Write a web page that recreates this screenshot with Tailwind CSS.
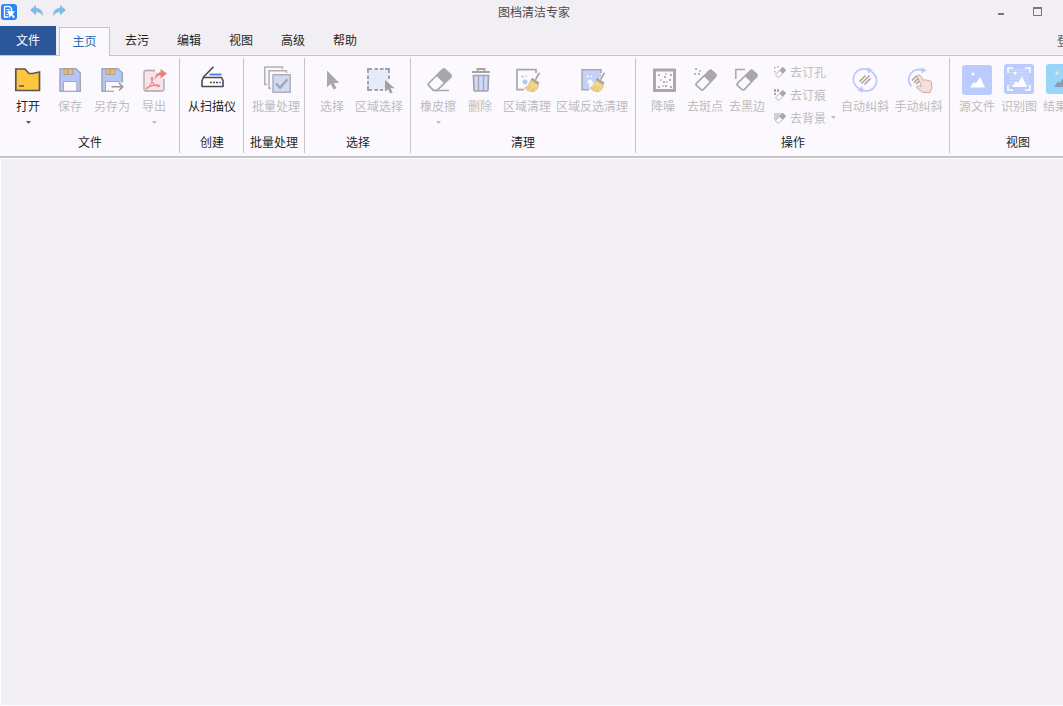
<!DOCTYPE html>
<html lang="zh-CN">
<head>
<meta charset="utf-8">
<meta name="viewport" content="width=device-width, initial-scale=1">
<title>图档清洁专家</title>
<script src="https://cdn.jsdelivr.net/npm/@tailwindcss/browser@4"></script>
</head>
<body class="flex min-h-screen flex-col overflow-hidden bg-[#f1eff3] font-['Liberation_Sans','Noto_Sans_CJK_SC',sans-serif] text-xs leading-4 text-[#1f1f1f]">

<!-- shared shapes -->
<svg class="hidden" aria-hidden="true">
  <symbol id="eraser" viewBox="0 0 24 24">
    <path d="M1.800 15.400 15.600 1.900a2 2 0 0 1 2.800 0l3.900 3.700a2 2 0 0 1 0 2.800L9.300 22.200a2 2 0 0 1-2.800 0l-4.700-4a2 2 0 0 1 0-2.800Z" fill="#fbf9fd" stroke="#a9a7ab" stroke-width="1.800"/>
    <path d="M9.600 7.800 15.600 1.500a2 2 0 0 1 2.800 0l4.300 4.100a2 2 0 0 1 0 2.800l-6 6.400Z" fill="#a9a7ab"/>
  </symbol>
  <symbol id="broom" viewBox="0 0 16 20">
    <path d="M15 .8 11 7.600" stroke="#a9a7ab" stroke-width="1.800" fill="none"/>
    <path d="m7.500 5.700 7.500 4.800-1.200 2.200-7.500-4.600Z" fill="#aaa39d"/>
    <path d="M6.200 8.300 13.800 13c-.4 3-2 5.400-4.600 6.600C5.600 19.600 2 18.500 .3 16c2.600-1 4.700-3.900 5.900-7.700Z" fill="#f3d588" stroke="#c6ac83" stroke-width=".7"/>
    <path d="m3.600 17 2.600-2.600M7 18.500l2.300-3" stroke="#d0a862" stroke-width=".8"/>
  </symbol>
  <symbol id="caret" viewBox="0 0 5 3"><path d="M0 0h5L2.500 3Z" fill="currentColor"/></symbol>
</svg>

<header class="flex h-[26px] items-start">
  <div class="flex flex-1 items-center pl-px pt-1">
    <svg class="size-4" viewBox="0 0 16 16" role="img" aria-label="图档清洁专家">
      <rect width="16" height="16" rx="3" fill="#2c83f4"/>
      <path d="M3.500 2.500h5l2 2v2.500M3.500 2.500v10.500h4" stroke="#fff" stroke-width="1.400" fill="none"/>
      <path d="M5.500 5.500h3M5.500 8h2M5.500 10.500h1.500" stroke="#fff" fill="none"/>
      <path d="m6.500 6.500 7.500 1-2.500 2.500 2.500 3-1.200 1.200-2.800-2.700-1.500 2.500Z" fill="#fff"/>
    </svg>
    <button type="button" aria-label="撤销" class="-mt-0.5 ml-[13px]">
      <svg class="h-3 w-[14px]" viewBox="0 0 14 12"><path d="M0 5 6 0v3c4.500 0 7 3 7 8.500C11.500 8.500 9.500 7.300 6 7.300v3Z" fill="#82bce2"/></svg>
    </button>
    <button type="button" aria-label="重做" class="-mt-0.5 ml-2">
      <svg class="h-3 w-[14px]" viewBox="0 0 14 12"><path d="M14 5 8 0v3C3.500 3 1 6 1 11.500 2.500 8.500 4.500 7.300 8 7.300v3Z" fill="#82bce2"/></svg>
    </button>
  </div>
  <h1 class="ml-3 pt-[5px] text-[#4b494d]">图档清洁专家</h1>
  <div class="flex flex-1 justify-end pr-2">
    <button type="button" aria-label="最小化" class="flex h-[23px] w-9 items-center justify-center">
      <svg class="size-[11px]" viewBox="0 0 11 11"><path d="M2 7h6v2H2Z" fill="#77757a"/></svg>
    </button>
    <button type="button" aria-label="最大化" class="flex h-[23px] w-9 items-center justify-center">
      <svg class="size-[9px]" viewBox="0 0 9 9"><path d="M.5 1v7.500h8V1Z" fill="none" stroke="#77757a"/><path d="M0 0h9v2H0Z" fill="#77757a"/></svg>
    </button>
  </div>
</header>

<nav class="flex h-[30px] border-b border-[#c6c4c8]" aria-label="功能区">
  <button type="button" class="mr-[3px] w-14 bg-[#2b579a] pt-px text-white">文件</button>
  <button type="button" class="-mb-px w-[52px] pr-px pt-px"><span class="flex h-full items-center justify-center border border-b-0 border-[#c6c4c8] bg-[#fbf9fd] pb-px text-[#2b66ae]">主页</span></button>
  <button type="button" class="w-[52px] pt-px">去污</button>
  <button type="button" class="w-[52px] pt-px">编辑</button>
  <button type="button" class="w-[52px] pt-px">视图</button>
  <button type="button" class="w-[52px] pt-px">高级</button>
  <button type="button" class="w-[52px] pt-px">帮助</button>
  <button type="button" class="-mr-[18px] ml-auto shrink-0 whitespace-nowrap pt-0.5 text-[#5a585c]">登录</button>
</nav>

<div class="flex overflow-hidden whitespace-nowrap border-b-2 border-[#c6c4c8] bg-[#fbf9fd] pb-[3px] pt-0.5" role="toolbar">

  <section class="shrink-0 border-r border-[#c6c4c8] pb-0.5 pl-[7px] pr-1" aria-labelledby="g-file">
    <div class="flex h-[77px] items-start text-[#bebcc0]">
      <button type="button" class="flex w-[42px] flex-col items-center gap-[3px] pt-1.5 text-[#1f1f1f]">
        <svg class="size-8" viewBox="0 0 32 32"><path d="M3.800 5h9.200l4 4.500h3.500L27.500 8v18.500H3.800Z" fill="#fcc63f" stroke="#5a5651" stroke-width="1.700"/><path d="M7 22h5" stroke="#5a5651" stroke-width="1.500"/></svg>
        <span>打开</span>
        <svg class="mt-[3px] h-[3px] w-[5px] text-[#5c5a5e]"><use href="#caret"/></svg>
      </button>
      <button type="button" disabled class="flex w-[42px] flex-col items-center gap-[3px] pt-1.5">
        <svg class="size-8" viewBox="0 0 32 32"><path d="M6 4.700h16L26.300 9v18.300H6Z" fill="#b4c6f8" stroke="#a5a7b5" stroke-width="1.500" stroke-linejoin="round"/><path d="M10 5h9v5.500h-9Z" fill="#eebb75" stroke="#ad9d91" stroke-width="1"/><path d="M14 5.500v4" stroke="#ad9579" stroke-width="1.300"/><path d="M9.500 17.500h13.300v9.700H9.500Z" fill="#fbf9fd" stroke="#a9a7ab"/></svg>
        <span>保存</span>
      </button>
      <button type="button" disabled class="flex w-[42px] flex-col items-center gap-[3px] pt-1.5">
        <svg class="size-8" viewBox="0 0 32 32"><path d="M6 4.700h16L26.300 9v18.300H6Z" fill="#b4c6f8" stroke="#a5a7b5" stroke-width="1.500" stroke-linejoin="round"/><path d="M10 5h9v5.500h-9Z" fill="#eebb75" stroke="#ad9d91" stroke-width="1"/><path d="M14 5.500v4" stroke="#ad9579" stroke-width="1.300"/><path d="M9.500 17.500h13.300v9.700H9.500Z" fill="#fbf9fd" stroke="#a9a7ab"/><path d="M18 18.500h10V29H18Z" fill="#fbf9fd"/><path d="M15.500 22.700h11M23 19l3.800 3.700L23 26.500" fill="none" stroke="#9a989c" stroke-width="1.600"/></svg>
        <span>另存为</span>
      </button>
      <button type="button" disabled class="flex w-[42px] flex-col items-center gap-[3px] pt-1.5">
        <svg class="size-8" viewBox="0 0 32 32"><path d="M17 6.500H7.500a1.500 1.500 0 0 0-1.500 1.500v17.500A1.500 1.500 0 0 0 7.500 27H24.500a1.500 1.500 0 0 0 1.500-1.500V14Z" fill="#f8e3e9"/><path d="M17 6.500H7.500a1.500 1.500 0 0 0-1.500 1.500v17.500A1.500 1.500 0 0 0 7.500 27H24.500a1.500 1.500 0 0 0 1.500-1.500V15" fill="none" stroke="#a9a7ab" stroke-width="1.300"/><path d="M9 24.500c2-1 5.500-6.500 5.800-10 .1-1.600-2-1.500-1.600.2.900 4 3.300 6.800 6.300 7.800 2.500.7 3-1.300.7-1.600-3.500-.4-8 1-11 2.600-1.700 1-1.100 1.700-.2 1Z" fill="none" stroke="#e58d94" stroke-width="1.200"/><path d="M16.500 16c.5-5 2.500-7.500 6-7.500V5l6.500 4.500-6.500 5v-3.300c-2.500 0-4.400 1.500-6 4.800Z" fill="#e2847f"/></svg>
        <span>导出</span>
        <svg class="mt-[3px] h-[3px] w-[5px]"><use href="#caret"/></svg>
      </button>
    </div>
    <h2 id="g-file" class="pr-0.5 text-center">文件</h2>
  </section>

  <section class="shrink-0 border-r border-[#c6c4c8] pb-0.5 pl-[5px] pr-1" aria-labelledby="g-new">
    <div class="flex h-[77px] items-start">
      <button type="button" class="flex w-[54px] flex-col items-center gap-[3px] pt-1.5">
        <svg class="size-8" viewBox="0 0 32 32" fill="none"><path d="M7 13.500 17.500 2.700" stroke="#4a484c" stroke-width="1.600"/><path d="M13.500 10.500h12" stroke="#4c79ea" stroke-width="1.800"/><path d="M7.500 13.500h18l1.500 3v6H6v-6Z" fill="#fff" stroke="#4a484c" stroke-width="1.600" stroke-linejoin="round"/><path d="M14 18.500h9" stroke="#4a484c" stroke-width="1.600" stroke-dasharray="2 1"/><path d="M23 18.500h2" stroke="#4c79ea" stroke-width="1.600"/></svg>
        <span>从扫描仪</span>
      </button>
    </div>
    <h2 id="g-new" class="text-center">创建</h2>
  </section>

  <section class="shrink-0 border-r border-[#c6c4c8] pb-0.5 pl-[5px] pr-px" aria-labelledby="g-batch">
    <div class="flex h-[77px] items-start text-[#bebcc0]">
      <button type="button" disabled class="flex w-[54px] flex-col items-center gap-[3px] pt-1.5">
        <svg class="size-8" viewBox="0 0 32 32" fill="none"><path d="M22.500 5V3H4.800v17.500H7M26.500 9V6.800H9v17.500h2" stroke="#b2b0b5" stroke-width="1.500"/><path d="M13 10.800h17.200v17.400H13Z" fill="#cfdaf5" stroke="#b2b0b5" stroke-width="1.500"/><path d="m16 19.500 4 4.300 7.500-8.500" stroke="#a3a3ab" stroke-width="2.200"/></svg>
        <span>批量处理</span>
      </button>
    </div>
    <h2 id="g-batch" class="pr-1 text-center">批量处理</h2>
  </section>

  <section class="shrink-0 border-r border-[#c6c4c8] pb-0.5 pl-[7px] pr-1" aria-labelledby="g-select">
    <div class="flex h-[77px] items-start text-[#bebcc0]">
      <button type="button" disabled class="flex w-10 flex-col items-center gap-[3px] pt-1.5">
        <svg class="size-8" viewBox="0 0 32 32"><path d="M11 6.500v16.700l3.800-3.300 2.700 5.700 3-1.400-2.700-5.300h5.500Z" fill="#a9a7ab"/></svg>
        <span>选择</span>
      </button>
      <button type="button" disabled class="flex w-[54px] flex-col items-center gap-[3px] pt-1.5">
        <svg class="size-8" viewBox="0 0 32 32"><path d="M5 5h21v21H5Z" fill="#e4ecfa"/><path d="M9 5H5v4M22 5h4v4M9 26H5v-4M11.500 5h3.500M17 5h3.500M5 11.500V15M5 17v3.500M26 11.500V15M11.500 26h3.500M17 26h3" fill="none" stroke="#a3a1a6" stroke-width="1.900"/><path d="M22 16v11.700l3-2.500 2.200 4.300 2.500-1.300-2.200-3.900h4.200Z" fill="#a3a1a6"/></svg>
        <span>区域选择</span>
      </button>
    </div>
    <h2 id="g-select" class="pr-0.5 text-center">选择</h2>
  </section>

  <section class="shrink-0 border-r border-[#c6c4c8] pb-0.5 pl-1.5 pr-1" aria-labelledby="g-clean">
    <div class="flex h-[77px] items-start text-[#bebcc0]">
      <button type="button" disabled class="flex w-[42px] flex-col items-center gap-[3px] pt-1.5">
        <svg class="size-8" viewBox="0 0 32 32"><path d="M7 19 20.500 5.500a2 2 0 0 1 2.800 0l5.200 5a2 2 0 0 1 0 2.800L15 26.300h-3.500L7 21.800a2 2 0 0 1 0-2.800Z" fill="#fbf9fd" stroke="#a9a7ab" stroke-width="1.700"/><path d="m14.300 11.700 6.200-6.200a2 2 0 0 1 2.800 0l5.200 5a2 2 0 0 1 0 2.800l-6.200 6.200Z" fill="#a9a7ab"/><path d="M12 26.500h15" stroke="#a9a7ab" stroke-width="1.500"/></svg>
        <span>橡皮擦</span>
        <svg class="mt-[3px] h-[3px] w-[5px]"><use href="#caret"/></svg>
      </button>
      <button type="button" disabled class="flex w-[42px] flex-col items-center gap-[3px] pt-1.5">
        <svg class="size-8" viewBox="0 0 32 32" fill="none"><path d="M13.500 7V5h7v2M8 8h18" stroke="#a5a3a8" stroke-width="1.800"/><path d="M9.500 11.500h15L24 26a1 1 0 0 1-1 1H11a1 1 0 0 1-1-1Z" fill="#cddafb" stroke="#a5a3a8" stroke-width="1.700"/><path d="M14.500 12v14M19.500 12v14" stroke="#a5a3b0" stroke-width="1.300"/></svg>
        <span>删除</span>
      </button>
      <button type="button" disabled class="flex w-[52px] flex-col items-center gap-[3px] pt-1.5">
        <svg class="size-8" viewBox="0 0 32 32"><path d="M25 9V5.700H6v20h7" fill="none" stroke="#a9a7ab" stroke-width="1.700"/><path d="M10.500 11.500h2v2h-2Zm4 0H16V13h-1.500Zm-.5 4a2.500 2.500 0 1 1 0 5 2.500 2.500 0 0 1 0-5Z" fill="#b6c7f6"/><use href="#broom" x="13" y="8" width="17" height="20"/></svg>
        <span>区域清理</span>
      </button>
      <button type="button" disabled class="flex w-[78px] flex-col items-center gap-[3px] pt-1.5">
        <svg class="size-8" viewBox="0 0 32 32"><path d="M6 5.700h19V13l-7 5-5 3.500v4.200H6Z" fill="#c2d0fa"/><path d="M25 9V5.700H6v20h7" fill="none" stroke="#a9a7b4" stroke-width="1.500"/><path d="M10.500 11.500h2v2h-2Zm4 0H16V13h-1.500Zm-.5 4a2.500 2.500 0 1 1 0 5 2.500 2.500 0 0 1 0-5Z" fill="#fbf9fd"/><use href="#broom" x="13" y="8" width="17" height="20"/></svg>
        <span>区域反选清理</span>
      </button>
    </div>
    <h2 id="g-clean" class="pr-0.5 text-center">清理</h2>
  </section>

  <section class="shrink-0 border-r border-[#c6c4c8] pb-0.5 pl-1.5 pr-[3px]" aria-labelledby="g-ops">
    <div class="flex h-[77px] items-start text-[#bebcc0]">
      <button type="button" disabled class="flex w-[42px] flex-col items-center gap-[3px] pt-1.5">
        <svg class="size-8" viewBox="0 0 32 32"><path d="M7.500 6h20v20.500h-20Z" fill="#fbf9fd" stroke="#a9a7ab" stroke-width="3"/><path d="M11 10h2v2h-2Zm6 2h2v2h-2Zm6-2h2v2h-2Zm-1 5h2v2h-2Zm-6 2h2v2h-2Zm-5 5h2v2h-2Zm7-1h2v2h-2Zm5 1h2v2h-2Z" fill="#b1afb4"/><path d="M18 9h2v2h-2Zm-5 6h2v2h-2Zm6 2h2v2h-2Zm-4 4h2v2h-2Z" fill="#e3c3ba"/></svg>
        <span>降噪</span>
      </button>
      <button type="button" disabled class="flex w-[42px] flex-col items-center gap-[3px] pt-1.5">
        <svg class="size-8" viewBox="0 0 32 32"><use href="#eraser" x="6" y="5" width="22" height="22"/><path d="M5 9h2v2H5Zm4 0h2v2H9ZM6 4h2v2H6Z" fill="#b5b3b8"/><path d="M10 6h2v2h-2Z" fill="#b8c6ef"/></svg>
        <span>去斑点</span>
      </button>
      <button type="button" disabled class="flex w-[42px] flex-col items-center gap-[3px] pt-1.5">
        <svg class="size-8" viewBox="0 0 32 32"><use href="#eraser" x="5" y="5" width="22" height="22"/><path d="M4.800 15V5.500H14" fill="none" stroke="#a9a7ab" stroke-width="1.500"/></svg>
        <span>去黑边</span>
      </button>
      <div class="ml-[5px] flex w-[65px] flex-col pt-[3px]">
        <button type="button" disabled class="flex h-[23px] items-center gap-[3px]">
          <svg class="-mt-0.5 size-[14px]" viewBox="0 0 14 14"><use href="#eraser" x="2" y="2" width="11" height="11"/><path d="M1 2h1.500v1.500H1Zm3-1h1.500v1.500H4ZM1 6h1.500v1.500H1Z" fill="#b8ad98"/></svg>
          <span>去订孔</span>
        </button>
        <button type="button" disabled class="flex h-[23px] items-center gap-[3px]">
          <svg class="-mt-0.5 size-[14px]" viewBox="0 0 14 14"><use href="#eraser" x="2" y="2" width="11" height="11"/><path d="M1 1h2v3H1Zm3 0h2v3H4ZM1 5h2v2H1Z" fill="#b5a98c"/></svg>
          <span>去订痕</span>
        </button>
        <button type="button" disabled class="flex h-[23px] items-center gap-[3px]">
          <svg class="-mt-0.5 size-[14px]" viewBox="0 0 14 14"><path d="M1 2h8v2L3 9H1Z" fill="#d3d1d6"/><use href="#eraser" x="2" y="2" width="11" height="11"/></svg>
          <span>去背景</span>
          <svg class="-mt-0.5 ml-0.5 h-[3px] w-[5px] shrink-0"><use href="#caret"/></svg>
        </button>
      </div>
      <button type="button" disabled class="flex w-[54px] flex-col items-center gap-[3px] pt-1.5">
        <svg class="size-8" viewBox="0 0 32 32" fill="none"><path d="M9.500 24A10 10 0 0 1 19.500 6.300M22.500 8A10 10 0 0 1 12.500 25.600" stroke="#bccafa" stroke-width="1.800"/><path d="m18.500 3 5.500 3.500-5 3ZM13.500 22.500 8 25.500l5.500 3.500Z" fill="#bccafa"/><path d="m10.500 17.500 6-6M12.500 19.500l8-8M15.500 20.500l6-6" stroke="#a9a09f" stroke-width="1.500"/></svg>
        <span>自动纠斜</span>
      </button>
      <button type="button" disabled class="flex w-[54px] flex-col items-center gap-[3px] pt-1.5 pr-px">
        <svg class="size-8" viewBox="0 0 32 32" fill="none"><path d="M8.500 22.500A10 10 0 0 1 19.500 6.300" stroke="#bccafa" stroke-width="1.800"/><path d="m18.500 3 5 3.500-5 3Z" fill="#bccafa"/><path d="m9 16.500 5-5M11 18.500l5.500-5.500M13 20l3-3" stroke="#a9a09f" stroke-width="1.500"/><path d="M15 11.500c1-1 2-.5 2.600.4l3 4.600c1.200-1.200 2.600-1 3 0 1-.8 2.300-.6 2.700.5 1-.4 2 0 2.200 1.300l.5 5.700-2 4.500h-7L14 24c-1-1.500.2-2.500 1.500-2l3 .5-3.700-8.700c-.4-.9-.3-1.800.2-2.300Z" fill="#f6dfd8" stroke="#c9aaa4"/></svg>
        <span>手动纠斜</span>
      </button>
    </div>
    <h2 id="g-ops" class="pr-0.5 text-center">操作</h2>
  </section>

  <section class="shrink-0 pb-0.5 pl-1.5 pr-1" aria-labelledby="g-view">
    <div class="flex h-[77px] items-start text-[#bebcc0]">
      <button type="button" disabled class="flex w-[42px] flex-col items-center gap-[3px] pt-1.5">
        <svg class="size-8" viewBox="0 0 32 32"><rect x="1" y="1" width="30" height="30" rx="3" fill="#bccbfd"/><path d="m9 23.500 4-5.500 2 1.500 4-6.500 5 10.500Z" fill="#fff"/><circle cx="12" cy="10" r="1.500" fill="#fff"/></svg>
        <span>源文件</span>
      </button>
      <button type="button" disabled class="flex w-[42px] flex-col items-center gap-[3px] pt-1.5">
        <svg class="size-8" viewBox="0 0 32 32"><rect x="1" y="0" width="30" height="30" rx="3" fill="#bccbfd"/><path d="M6 6h20M6 9h20M6 12h20M6 15h20M6 18h20M6 21h20" stroke="#d3ddfe" stroke-width="1.200"/><path d="m9 23 4-5.500 2 1.500 4-6.500 5 10.500Z" fill="#fff"/><circle cx="12" cy="9" r="1.500" fill="#fff"/><path d="M5 9V4h5M22 4h5v5M5 21v5h5M22 26h5v-5" fill="none" stroke="#fff" stroke-width="1.500"/></svg>
        <span>识别图</span>
      </button>
      <button type="button" disabled class="flex w-[42px] flex-col items-center gap-[3px] pt-1.5">
        <svg class="size-8" viewBox="0 0 32 32"><rect x="1" y="0" width="30" height="30" rx="3" fill="#98d5fb"/><path d="m9 23 4-5.500 2 1.500 4-6.500 5 10.500Z" fill="#8a9cab"/><circle cx="12" cy="9" r="1.700" fill="#f0e3bb"/></svg>
        <span>结果图</span>
      </button>
    </div>
    <h2 id="g-view" class="pr-0.5 text-center">视图</h2>
  </section>
</div>

<main class="flex-1 border-y border-l border-[#fdfcfe]" aria-label="工作区"></main>
</body>
</html>
